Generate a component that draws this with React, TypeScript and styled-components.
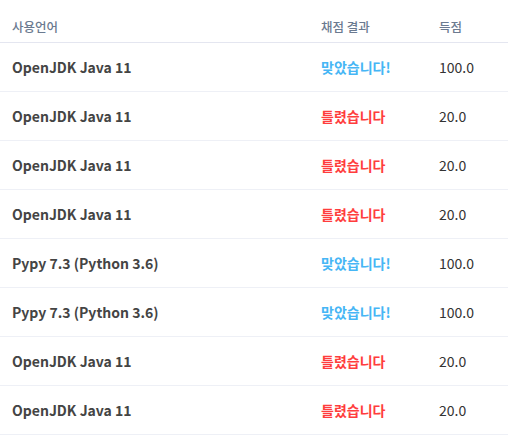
import React from "react";
import styled, { createGlobalStyle } from "styled-components";

type Row = { lang: string; ok: boolean; score: string };

const rows: Row[] = [
  { lang: "OpenJDK Java 11", ok: true, score: "100.0" },
  { lang: "OpenJDK Java 11", ok: false, score: "20.0" },
  { lang: "OpenJDK Java 11", ok: false, score: "20.0" },
  { lang: "OpenJDK Java 11", ok: false, score: "20.0" },
  { lang: "Pypy 7.3 (Python 3.6)", ok: true, score: "100.0" },
  { lang: "Pypy 7.3 (Python 3.6)", ok: true, score: "100.0" },
  { lang: "OpenJDK Java 11", ok: false, score: "20.0" },
  { lang: "OpenJDK Java 11", ok: false, score: "20.0" },
];

const App: React.FC = () => {
  return (
    <>
      <GlobalStyle />
      <Table>
        <HeadRow>
          <HeadCell>사용언어</HeadCell>
          <HeadCell>채점 결과</HeadCell>
          <HeadCell>득점</HeadCell>
        </HeadRow>
        {rows.map((r, i) => (
          <BodyRow key={i}>
            <LangCell>{r.lang}</LangCell>
            <ResultCell $ok={r.ok}>{r.ok ? "맞았습니다!" : "틀렸습니다"}</ResultCell>
            <ScoreCell>{r.score}</ScoreCell>
          </BodyRow>
        ))}
      </Table>
    </>
  );
};

const GlobalStyle = createGlobalStyle`
  body {
    margin: 0;
    background: #fff;
    font-family: "Noto Sans CJK KR", "Noto Sans", sans-serif;
  }
`;

const Table = styled.div`
  width: 508px;
  display: flex;
  flex-direction: column;
`;

const HeadRow = styled.div`
  display: grid;
  grid-template-columns: 309px 118px 1fr;
  height: 43px;
  box-sizing: border-box;
  border-bottom: 1px solid #e4e6f0;
  align-items: end;
  padding-bottom: 5px;
`;

const HeadCell = styled.div`
  padding-left: 12px;
  font-size: 12.5px;
  font-weight: 500;
  color: #6b7a90;
  line-height: 20px;
`;

const BodyRow = styled.div`
  display: grid;
  grid-template-columns: 309px 118px 1fr;
  height: 49px;
  box-sizing: border-box;
  border-bottom: 1px solid #eef0f6;
  align-items: center;
`;

const LangCell = styled.div`
  padding-left: 12px;
  font-size: 14px;
  font-weight: 700;
  color: #444;
`;

const ResultCell = styled.div<{ $ok: boolean }>`
  padding-left: 12px;
  font-size: 14px;
  font-weight: 700;
  color: ${(p) => (p.$ok ? "#46b6f5" : "#ff3d3d")};
`;

const ScoreCell = styled.div`
  padding-left: 12px;
  font-size: 14px;
  font-weight: 400;
  color: #333;
`;

export default App;
